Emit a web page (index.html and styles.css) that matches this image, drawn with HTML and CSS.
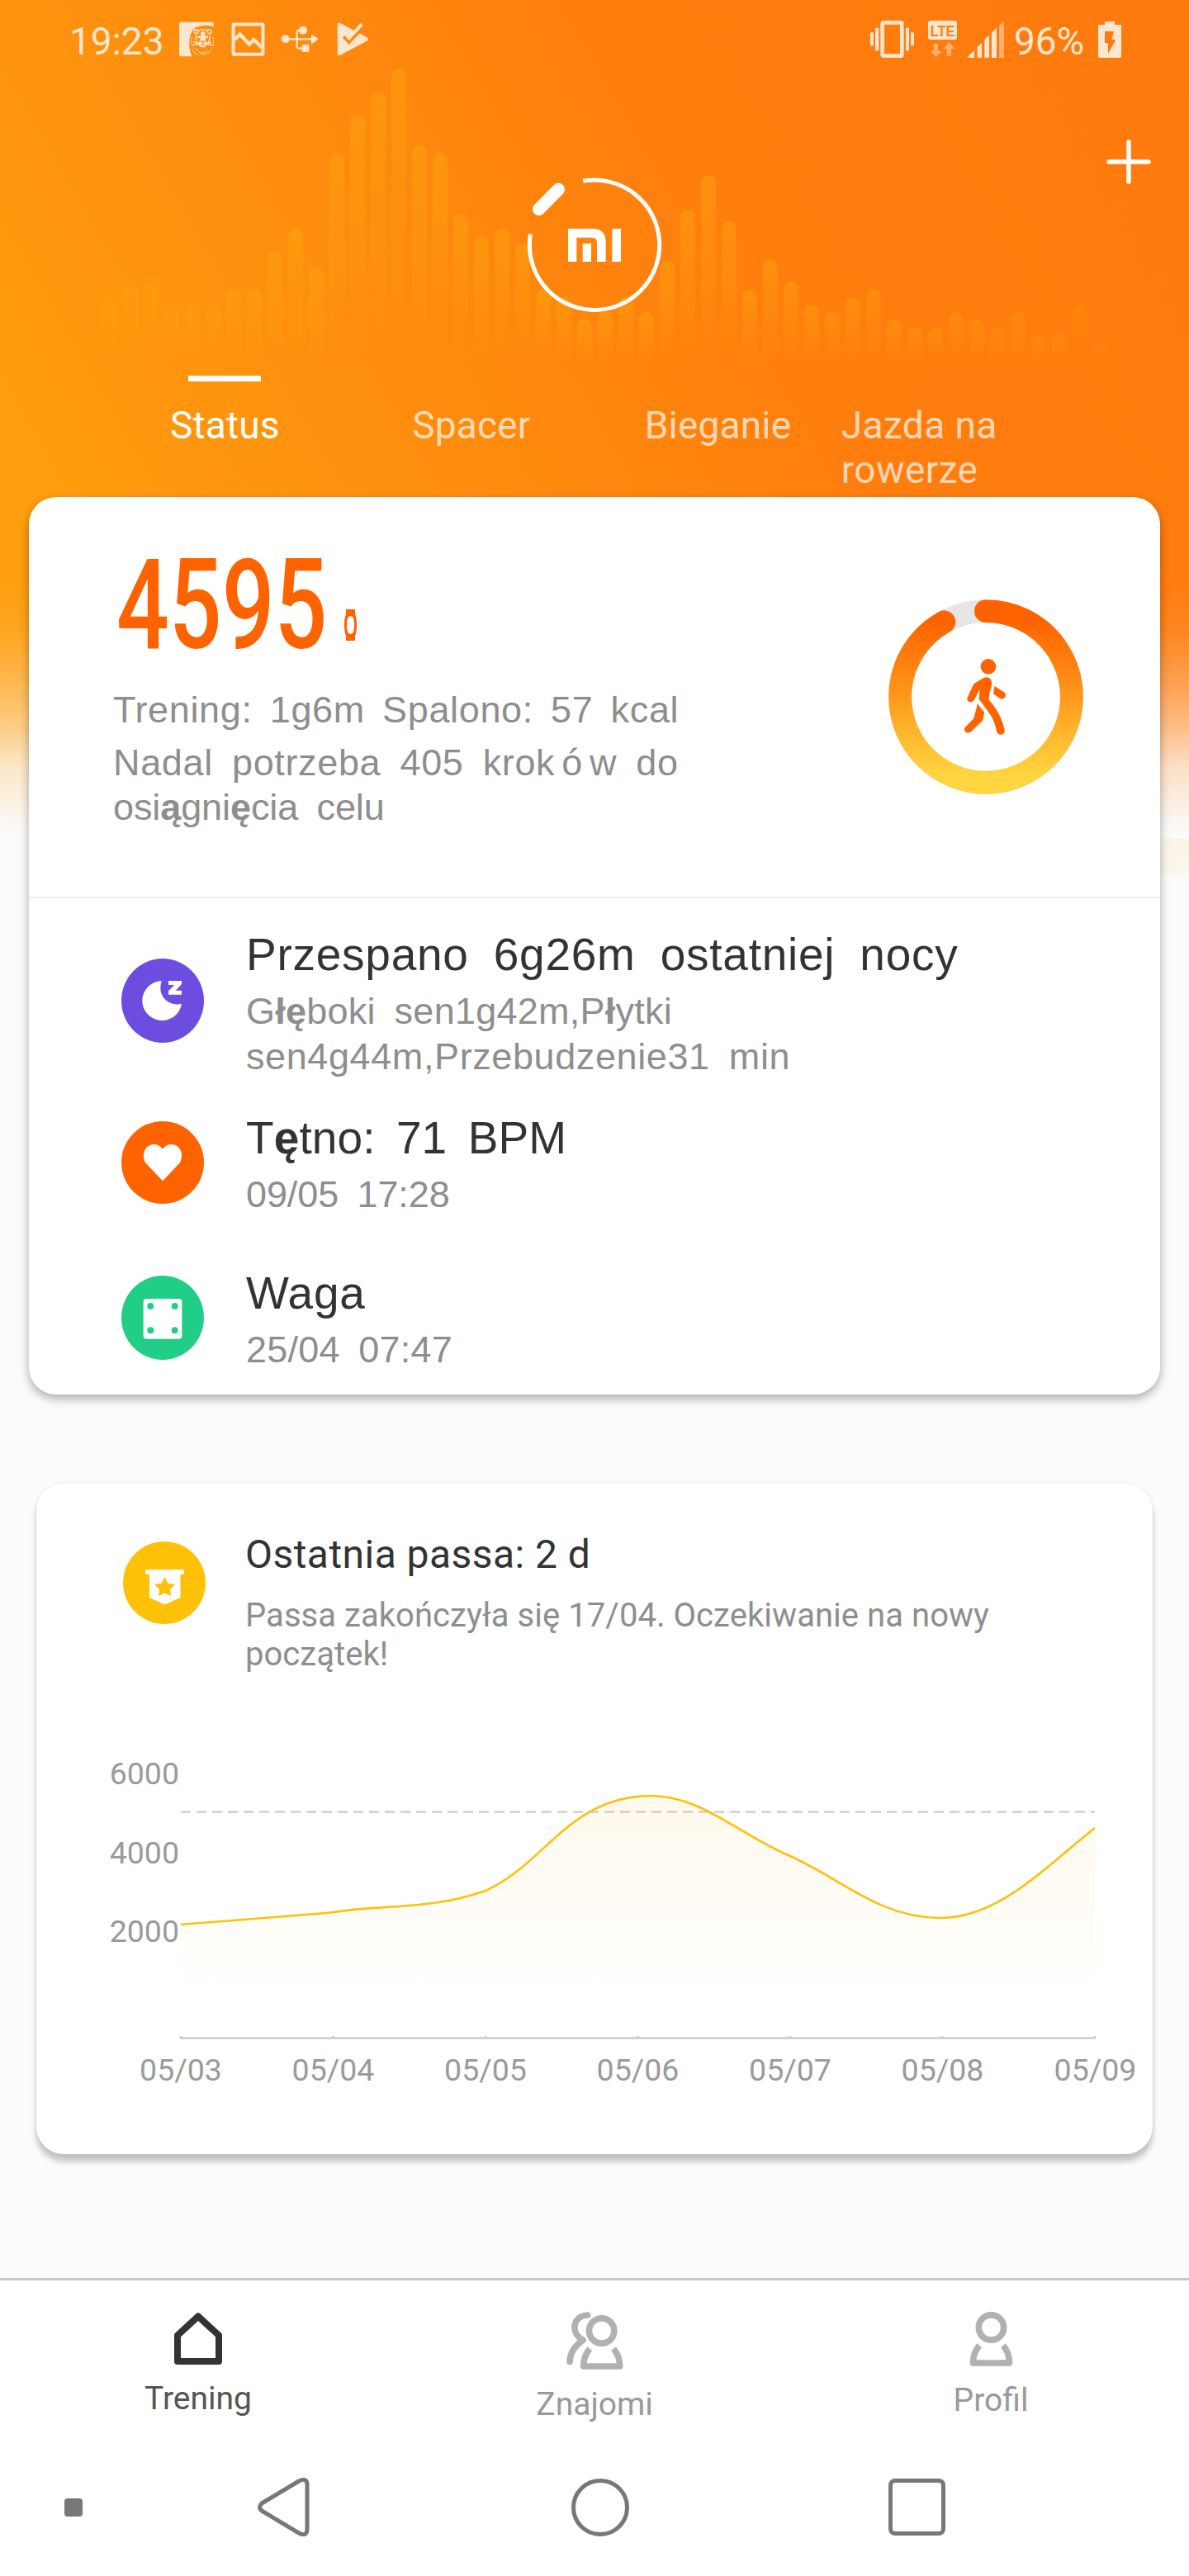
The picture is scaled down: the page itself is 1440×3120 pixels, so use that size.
FILE: index.html
```html
<!DOCTYPE html>
<html lang="pl">
<head>
<meta charset="utf-8">
<title>Mi Fit</title>
<link rel="stylesheet" href="styles.css">
</head>
<body>
<div class="screen">
  <header class="header">
    <div class="bars" aria-hidden="true">
      <i style="height:81px"></i><i style="height:99px"></i><i style="height:99px"></i><i style="height:72px"></i><i style="height:72px"></i><i style="height:71px"></i><i style="height:90px"></i><i style="height:90px"></i><i style="height:136px"></i><i style="height:163px"></i><i style="height:117px"></i><i style="height:255px"></i><i style="height:301px"></i><i style="height:329px"></i><i style="height:357px"></i><i style="height:265px"></i><i style="height:255px"></i><i style="height:181px"></i><i style="height:154px"></i><i style="height:163px"></i><i style="height:145px"></i><i style="height:90px"></i><i style="height:80px"></i><i style="height:54px"></i><i style="height:63px"></i><i style="height:80px"></i><i style="height:62px"></i><i style="height:124px"></i><i style="height:186px"></i><i style="height:228px"></i><i style="height:172px"></i><i style="height:90px"></i><i style="height:126px"></i><i style="height:99px"></i><i style="height:71px"></i><i style="height:62px"></i><i style="height:80px"></i><i style="height:90px"></i><i style="height:53px"></i><i style="height:44px"></i><i style="height:44px"></i><i style="height:62px"></i><i style="height:53px"></i><i style="height:44px"></i><i style="height:62px"></i><i style="height:34px"></i><i style="height:38px"></i><i style="height:71px"></i><i style="height:25px"></i>
    </div>

    <div class="status">
      <span class="time">19:23</span>
      <svg class="st-lion" width="42" height="45" viewBox="411 15 126 135">
        <path fill="#ffe6cf" d="M417 20H530Q536 20 536 26V40C528 32 510 31 496 33C462 36 452 58 449 84C445 108 450 128 457 145H417Q411 145 411 139V26Q411 20 417 20Z"/>
        <g fill="none" stroke="#ffe6cf" stroke-width="4">
          <circle cx="473" cy="55" r="7"/><circle cx="521" cy="55" r="7"/>
          <path d="M480 52Q497 42 514 52M472 66Q470 90 484 102M522 66Q524 90 510 102M462 92L478 98M460 104L478 102M528 92L516 98M534 104L516 102"/>
          <path stroke-dasharray="5 4" d="M458 76Q452 94 460 112M534 76Q539 90 533 112M458 120Q466 136 480 138M470 116Q490 142 512 124M490 136Q512 140 530 120"/>
        </g>
        <path fill="#ffe6cf" d="M490 55H504L507 88L514 98Q510 112 497 112Q484 112 480 98L487 88ZM477 72L487 70V78H478ZM507 70L517 72L516 78H507Z"/>
        <path fill="none" stroke="#ff8a10" stroke-width="3" d="M490 90H504L497 97ZM497 97V103M489 104H505"/>
      </svg>
      <svg class="st-pic" width="41" height="45" viewBox="600 15 123 135">
        <rect x="607.500" y="28.500" width="108" height="109" rx="3" fill="none" stroke="#ffe6cf" stroke-width="12"/>
        <path fill="none" stroke="#ffe6cf" stroke-width="13" d="M612 84L632 65L666 101L682 84L711 112"/>
      </svg>
      <svg class="st-usb" width="46" height="45" viewBox="781 15 138 135">
        <g fill="#ffe6cf"><circle cx="798" cy="82" r="15"/><circle cx="862" cy="50" r="15"/><rect x="858" y="102" width="26" height="27"/><path d="M892 64L918 82L892 102Z"/></g>
        <path fill="none" stroke="#ffe6cf" stroke-width="7" d="M798 82H895M862 50H848Q840 50 840 58V108Q840 116 848 116H862"/>
      </svg>
      <svg class="st-play" width="39" height="45" viewBox="985 15 117 135">
        <path fill="#ffe6cf" d="M987 28Q987 20 996 23L1047 51L1071 24L1080 32L1029 88L1014 69L1006 77L1029 102L1068 61L1096 77Q1102 82 1096 88L998 140Q987 144 987 134Z"/>
      </svg>
      <svg class="st-vib" width="53" height="45" viewBox="42 45 159 135">
        <g fill="#ffe6cf"><rect x="42" y="88" width="12" height="48"/><rect x="60" y="71" width="13" height="83"/><rect x="171" y="71" width="12" height="83"/><rect x="189" y="88" width="12" height="48"/></g>
        <rect x="86" y="52" width="71" height="121" rx="5" fill="none" stroke="#ffe6cf" stroke-width="14"/>
      </svg>
      <svg class="st-lte" width="35" height="45" viewBox="252 45 105 135">
        <rect x="252" y="45" width="105" height="69" rx="9" fill="#ffe6cf"/>
        <text x="305" y="101" class="lte" text-anchor="middle" textLength="89" lengthAdjust="spacingAndGlyphs">LTE</text>
        <path fill="#ffb06a" d="M272 128H288V155H302L281 178L260 155H272ZM328 123L350 147H336V174H320V147H307Z"/>
      </svg>
      <svg class="st-sig" width="45" height="45" viewBox="393 45 135 135">
        <path fill="#ffe6cf" d="M393 180L420 152V180ZM431 141L447 125V180H431ZM457 115L474 98V180H457ZM483 89L501 71V180H483Z"/>
        <path fill="#ffb06a" d="M510 64L528 46V180H510Z"/>
      </svg>
      <span class="batt-text">96%</span>
      <svg class="st-batt" width="28" height="45" viewBox="870 45 84 135">
        <path fill="#ffe6cf" fill-rule="evenodd" d="M894 48H930V60H954V174Q954 180 948 180H876Q870 180 870 174V60H894ZM894 84V126H906V165L934 114H919L927 84Z"/>
      </svg>
    </div>

    <svg class="plus" width="54" height="54" viewBox="0 0 54 54"><path d="M27 3V51M3 27H51" stroke="#fff" stroke-width="5.500" stroke-linecap="round"/></svg>

    <svg class="logo" width="200" height="200" viewBox="0 0 600 600">
      <path fill="none" stroke="#fff" stroke-width="15" d="M258.500 58A236 236 0 1 1 67.500 250"/>
      <path stroke="#fff" stroke-width="46" stroke-linecap="round" d="M98 160L169 88"/>
      <path fill="#fff" d="M204 231H292Q341 231 341 280V351H309V282Q309 263 290 263H235V351H204ZM257 285H288V351H257ZM364 231H396V351H364Z"/>
    </svg>

    <nav class="tabs">
      <span class="tab tab-on">Status</span>
      <span class="tab">Spacer</span>
      <span class="tab">Bieganie</span>
      <span class="tab tab-wrap">Jazda na rowerze</span>
    </nav>
  </header>

  <section class="card today">
    <div class="summary">
      <div class="summary-text">
        <div class="steps"><span class="steps-num">4595</span>
          <svg class="watch" width="15" height="38" viewBox="0 0 15 38"><path fill="#ff6300" fill-rule="evenodd" d="M2 0H13V6Q15 10 15 19T13 32V38H2V32Q0 28 0 19T2 6ZM7.500 8Q3 8 3 19T7.500 30Q12 30 12 19T7.500 8Z"/></svg>
        </div>
        <p class="line l-train">Trening: 1g6m Spalono: 57 kcal</p>
        <p class="line l-goal">Nadal potrzeba 405 krok<span class="wide">ó</span>w do</p>
        <p class="line l-goal2">osi<b>ą</b>gni<b>ę</b>cia celu</p>
      </div>
      <svg class="ring" width="236" height="236" viewBox="511 482 685 685">
        <defs><linearGradient id="ringFill" gradientUnits="userSpaceOnUse" x1="0" y1="560" x2="0" y2="1100"><stop offset="0" stop-color="#ff6300"/><stop offset=".5" stop-color="#ff9a1e"/><stop offset=".75" stop-color="#ffb92e"/><stop offset="1" stop-color="#ffd540"/></linearGradient></defs>
        <circle cx="853.500" cy="824.500" r="301.500" fill="none" stroke="#e6e6e6" stroke-width="81"/>
        <path d="M853.500 523A301.500 301.500 0 1 1 706.500 561.300" fill="none" stroke="url(#ringFill)" stroke-width="81" stroke-linecap="round"/>
        <g fill="#ff6300">
          <circle cx="862" cy="718" r="27"/>
          <path d="M815 776L843 759Q854 753 864 758Q873 762 874 773Q875 791 867 808L863 834Q888 862 901 889Q911 908 919 939Q922 953 910 957Q897 960 892 947Q884 912 871 890Q850 861 829 832L832 798L812 836Q805 845 794 842Q785 836 789 826L808 785Q811 779 815 776Z"/>
          <path d="M884 787L915 806Q926 813 922 824Q916 835 904 831L880 814Z"/>
          <path d="M824 848Q835 865 848 878L844 902Q843 908 837 913L801 947Q791 954 782 948Q774 939 781 931L811 900Q818 876 824 848Z"/>
        </g>
      </svg>
    </div>

    <div class="list">
      <div class="row">
        <svg class="badge b-sleep" width="100" height="102" viewBox="51 63 300 306">
          <ellipse cx="201" cy="216" rx="150" ry="153" fill="#6c4de0"/>
          <path fill="#fff" d="M197 144A72 72 0 1 0 270 227C232 238 178 208 197 144Z"/>
          <path fill="#fff" d="M222 144H270V156L248 179H270V194H222V181L243 159H222Z"/>
        </svg>
        <div class="row-text">
          <h2 class="t-sleep">Przespano 6g26m ostatniej nocy</h2>
          <p class="s-sleep1">G<b>łę</b>boki sen1g42m,P<b>ł</b>ytki</p>
          <p class="s-sleep2">sen4g44m,Przebudzenie31 min</p>
        </div>
      </div>
      <div class="row row-heart">
        <svg class="badge b-heart" width="100" height="100" viewBox="51 654 300 300">
          <circle cx="201" cy="804" r="150" fill="#ff6300"/>
          <path fill="#fff" d="M201 871L141 808C122 783 133 738 170 738Q188 738 201 755Q214 738 232 738C270 738 280 783 261 808Z"/>
        </svg>
        <div class="row-text">
          <h2 class="t-heart">T<b>ę</b>tno: 71 BPM</h2>
          <p class="s-heart">09/05 17:28</p>
        </div>
      </div>
      <div class="row row-weight">
        <svg class="badge b-weight" width="100" height="102" viewBox="51 1212 300 306">
          <ellipse cx="201" cy="1365" rx="150" ry="153" fill="#21ce87"/>
          <rect x="131" y="1296" width="140" height="146" rx="12" fill="#fff"/>
          <g fill="#21ce87"><circle cx="157" cy="1323" r="12"/><circle cx="245" cy="1323" r="12"/><circle cx="157" cy="1411" r="12"/><circle cx="245" cy="1411" r="12"/></g>
        </svg>
        <div class="row-text">
          <h2 class="t-weight">Waga</h2>
          <p class="s-weight">25/04 07:47</p>
        </div>
      </div>
    </div>
  </section>

  <section class="card streak">
    <div class="streak-head">
      <svg class="medal" width="100" height="100" viewBox="149 1867 100 100">
        <circle cx="199" cy="1917" r="50" fill="#ffc107"/>
        <path fill="#fff" d="M178 1901H221Q223 1901 223 1903V1905Q223 1907 218.500 1907V1935L199.500 1943.500L181 1935V1907Q176 1907 176 1905V1903Q176 1901 178 1901Z"/>
        <path fill="#ffc107" d="M199.500 1910L203.400 1917.500L212 1919L206 1925L207 1933L199.500 1929.500L192 1933L193 1925L187 1919L195.600 1917.500Z"/>
      </svg>
      <div class="streak-text">
        <h2>Ostatnia passa: 2 d</h2>
        <p>Passa zakończyła się 17/04. Oczekiwanie na nowy początek!</p>
      </div>
    </div>
    <svg class="chart" width="1352" height="420" viewBox="44 2120 1352 420">
      <defs><linearGradient id="area" gradientUnits="userSpaceOnUse" x1="0" y1="2174" x2="0" y2="2420"><stop offset="0" stop-color="#fff9ec"/><stop offset="1" stop-color="#fff"/></linearGradient></defs>
      <path fill="url(#area)" d="M219 2331C281 2326 350 2321 404 2316C465 2306 520 2314 588 2290C660 2258 690 2175 788 2175C850 2175 895 2222 957 2248C1020 2276 1065 2323 1139 2323C1210 2323 1265 2262 1326 2214V2420H219Z"/>
      <path d="M219 2194.500H1326" stroke="#c4c4c4" stroke-width="2" stroke-dasharray="12 7"/>
      <path fill="none" stroke="#ffc107" stroke-width="2.600" d="M219 2331C281 2326 350 2321 404 2316C465 2306 520 2314 588 2290C660 2258 690 2175 788 2175C850 2175 895 2222 957 2248C1020 2276 1065 2323 1139 2323C1210 2323 1265 2262 1326 2214"/>
      <path d="M218 2468.500H1327M219 2466V2469M403.500 2466V2469M588 2466V2469M772.500 2466V2469M957 2466V2469M1141.500 2466V2469M1326 2466V2469" stroke="#ccc" stroke-width="2.500"/>
      <g class="axis" text-anchor="end"><text x="217" y="2161">6000</text><text x="217" y="2257">4000</text><text x="217" y="2352">2000</text></g>
      <g class="axis" text-anchor="middle"><text x="219" y="2520">05/03</text><text x="403.500" y="2520">05/04</text><text x="588" y="2520">05/05</text><text x="772.500" y="2520">05/06</text><text x="957" y="2520">05/07</text><text x="1141.500" y="2520">05/08</text><text x="1326.500" y="2520">05/09</text></g>
    </svg>
  </section>

  <nav class="tabbar">
    <div class="item item-on">
      <svg width="58" height="64" viewBox="211 2800 58 64"><path fill="none" stroke="#333" stroke-width="8" stroke-linejoin="round" d="M215 2828.500L240 2805.500L265 2828.500V2860H215Z"/></svg>
      <span>Trening</span>
    </div>
    <div class="item item-friends">
      <svg width="69" height="70" viewBox="78 60 207 210"><g fill="none" stroke="#b1b1b1" stroke-width="23"><circle cx="206" cy="129" r="45.500"/><path stroke-linejoin="round" d="M163 194Q140 220 140 258H272Q272 220 249 194"/><path stroke-linecap="round" stroke-linejoin="round" d="M155 72C101 75 90 135 138 163C100 188 91 218 90 241"/></g></svg>
      <span>Znajomi</span>
    </div>
    <div class="item">
      <svg width="53" height="66" viewBox="127 72 158 198"><g fill="none" stroke="#b1b1b1" stroke-width="23"><circle cx="206" cy="129" r="45.500"/><path stroke-linejoin="round" d="M163 194Q140 220 140 258H272Q272 220 249 194"/></g></svg>
      <span>Profil</span>
    </div>
  </nav>

  <div class="sysnav">
    <i class="dot"></i>
    <svg class="back" width="63" height="71" viewBox="0 0 63 71"><path fill="none" stroke="#767876" stroke-width="5" stroke-linejoin="round" d="M5 31L50 4Q60 -1 60 9V62Q60 72 50 67L5 40Q0 36 5 31Z"/></svg>
    <i class="home"></i>
    <i class="recent"></i>
  </div>
</div>
</body>
</html>
```

FILE: styles.css
```css
* { box-sizing: border-box; margin: 0; padding: 0; }
body { background: #fbfbfb; font-family: Roboto, sans-serif; }
svg { display: block; flex: none; }
h2 { font-weight: 400; }

.screen {
  width: 1440px;
  height: 3120px;
  overflow: hidden;
  display: flex;
  flex-direction: column;
  background:
    linear-gradient(#fbf4e8, #fbf6ec) 1405px 1016px / 35px 42px no-repeat,
    linear-gradient(rgba(251,251,251,0) 700px, rgba(251,251,251,.07) 763px, rgba(251,251,251,.28) 827px, rgba(251,251,251,.5) 880px, rgba(251,251,251,.78) 930px, #fbfbfb 1010px) 0 0 / 100% 1016px no-repeat,
    linear-gradient(60deg, #ff9e0e 0, #ff9e0e 14%, #ff950e 27%, #fe890d 46%, #ff7e0e 64%, #ff7a0d 100%) 0 0 / 100% 1015px no-repeat,
    #fbfbfb;
}

/* header */
.header { height: 602px; flex: none; position: relative; display: flex; flex-direction: column; }
.bars {
  position: absolute; left: 124px; top: 83px; height: 357px; display: flex; align-items: flex-end; gap: 7px;
  -webkit-mask-image: linear-gradient(90deg, rgba(0,0,0,.5), #000 20%, #000 60%, rgba(0,0,0,.45));
  mask-image: linear-gradient(90deg, rgba(0,0,0,.5), #000 20%, #000 60%, rgba(0,0,0,.45));
}
.bars i { width: 18px; border-radius: 9px 9px 0 0; background: linear-gradient(rgba(255,166,14,.5), rgba(255,166,14,0)); }

.status { position: relative; height: 96px; padding: 25px 0 0 84px; display: flex; align-items: flex-start; color: #ffe6cf; font-size: 46px; line-height: 54px; }
.time { width: 133px; margin-top: -2px; }
.st-pic { margin-left: 21px; }
.st-usb { margin-left: 19px; }
.st-play { margin-left: 22px; }
.st-vib { margin-left: 607px; }
.st-lte { margin-left: 17px; overflow: visible; }
.st-sig { margin-left: 12px; }
.batt-text { width: 102px; margin: -2px 0 0 12px; letter-spacing: -.1px; }
.lte { font: 700 56px "Liberation Sans", sans-serif; fill: #ff7f10; }

.plus { position: absolute; left: 1340px; top: 169px; }
.logo { position: relative; margin: 104px auto 0; }

.tabs { display: grid; grid-template-columns: repeat(4, 298.600px); margin: 55px 0 0 123px; position: relative; }
.tab { color: rgba(255,255,255,.7); font-size: 46px; line-height: 54px; letter-spacing: .2px; text-align: center; padding-top: 33px; }
.tab-wrap { text-align: left; letter-spacing: .4px; }
.tab-on { color: #fff; }
.tab-on::before { content: ""; display: block; width: 88px; height: 7px; margin: -33px auto 26px; background: #fff; }

/* cards */
.card { background: #fff; border-radius: 33px; flex: none; }
.today { width: 1370px; height: 1087px; margin-left: 35px; box-shadow: 0 5px 12px rgba(0,0,0,.32); font-family: "Liberation Sans", sans-serif; }
.summary { height: 486px; border-bottom: 2px solid #ededed; padding: 71px 93px 0 102px; display: flex; justify-content: space-between; align-items: flex-start; }
.steps { display: flex; height: 120px; margin-bottom: 40px; }
.steps-num { width: 281px; font: 500 153px/120px Roboto, sans-serif; color: #ff6300; transform: scaleX(.734); transform-origin: 0 0; margin-left: 4px; margin-right: -5px; white-space: nowrap; }
.watch { margin-top: 65px; }
.line, .row-text p { color: #8e8e8e; font-size: 45px; line-height: 54px; white-space: nowrap; }
.l-train { margin-bottom: 10px; letter-spacing: .65px; word-spacing: 8px; }
.l-goal { letter-spacing: .65px; word-spacing: 10px; }
.l-goal2 { letter-spacing: -.1px; word-spacing: 10px; }
.wide { padding: 0 8px; }
.ring { margin-top: 53px; }

.list { padding: 36px 0 0 112px; }
.row { display: flex; gap: 51px; }
.row h2 { color: #333; font-size: 55px; line-height: 64px; margin-bottom: 10px; letter-spacing: .75px; word-spacing: 14px; white-space: nowrap; }
.row .t-heart { letter-spacing: .1px; word-spacing: 10px; }
.row-text p { line-height: 54.500px; letter-spacing: .6px; word-spacing: 10px; }
.row-text .s-sleep1 { letter-spacing: .25px; }
.row-text .s-heart { letter-spacing: -.1px; }
.row-text .s-weight { letter-spacing: .2px; }
.row-heart { margin-top: 39px; }
.row-weight { margin-top: 59px; }
.b-sleep { margin-top: 37px; }
.b-heart { margin-top: 12px; }
.b-weight { margin-top: 11px; }

.streak { width: 1352px; height: 812px; margin: 108px 0 0 44px; padding-top: 58px; box-shadow: 0 9px 7px rgba(0,0,0,.22), 0 0 4px rgba(0,0,0,.08); }
.streak-head { height: 172px; padding-left: 105px; display: flex; gap: 48px; }
.medal { margin-top: 12px; }
.streak-text h2 { color: #333; font-size: 48px; line-height: 56px; letter-spacing: .45px; }
.streak-text p { width: 930px; color: #8e8e8e; font-size: 40px; line-height: 47px; margin-top: 22px; letter-spacing: .05px; }
.chart { margin-top: 93px; }
.axis { font-size: 37.500px; fill: #9a9a9a; }

/* bottom navigation */
.tabbar { flex: none; height: 194px; margin-top: 150px; border-top: 3px solid #c9c9c9; background: #fff; display: grid; grid-template-columns: repeat(3, 480px); }
.item { display: flex; flex-direction: column; align-items: center; gap: 18px; padding-top: 38px; color: #999; font-size: 39px; line-height: 46px; }
.item-on { color: #555; }
.item-friends { gap: 19px; }

.sysnav { height: 167px; flex: none; background: #fff; display: flex; align-items: center; padding-left: 78px; }
.dot { width: 22px; height: 22px; border-radius: 4px; background: #767876; }
.back { margin-left: 212px; }
.home { width: 70px; height: 70px; border: 5px solid #767876; border-radius: 50%; margin-left: 317px; }
.recent { width: 69px; height: 69px; border: 5px solid #767876; border-radius: 8px; margin-left: 314px; }
```
